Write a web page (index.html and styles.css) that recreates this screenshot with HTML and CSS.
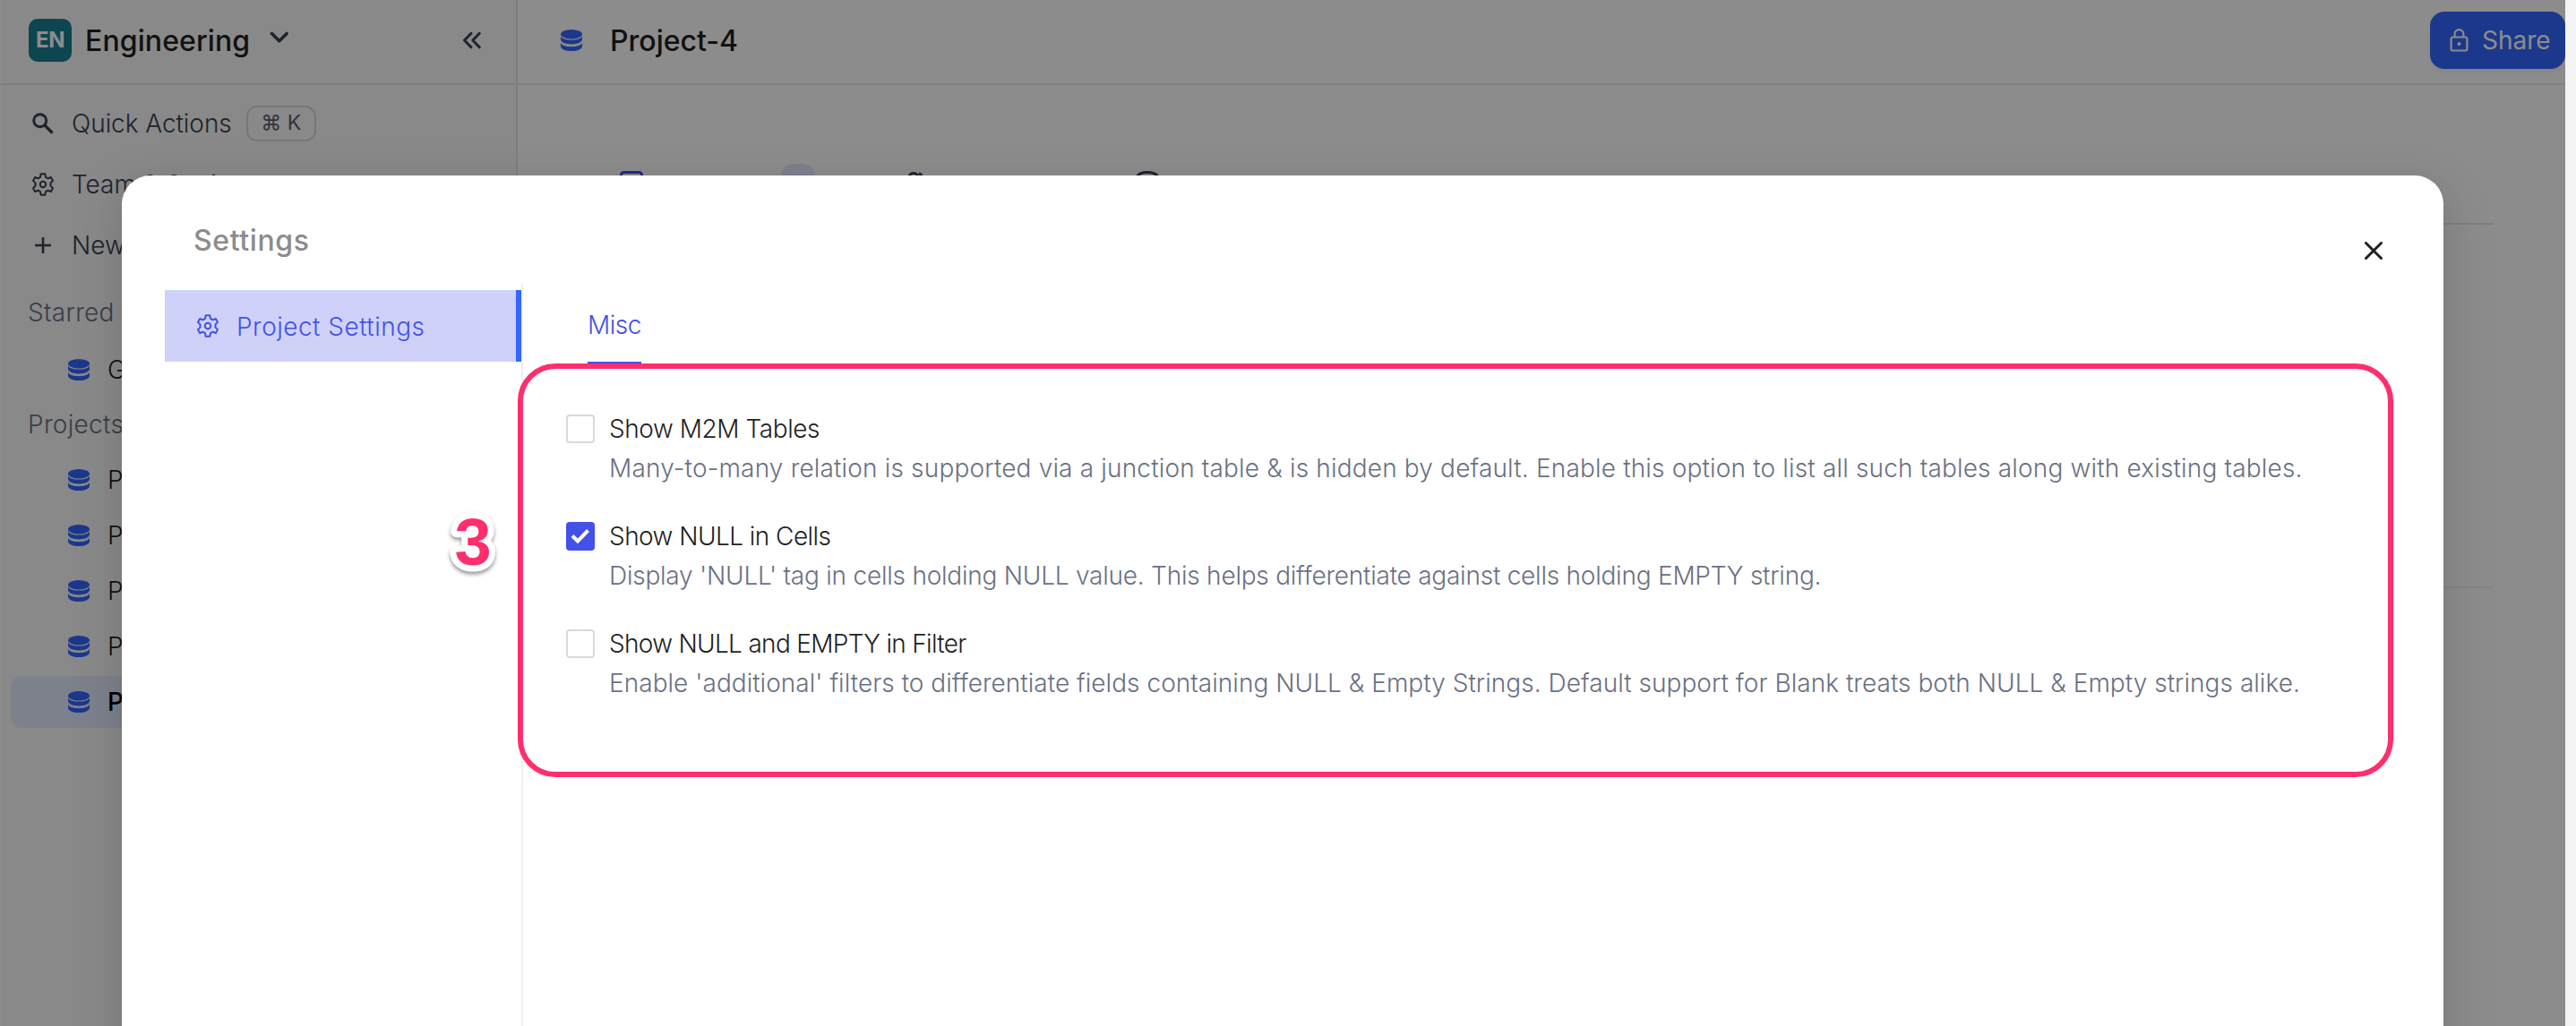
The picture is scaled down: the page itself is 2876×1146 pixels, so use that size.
FILE: index.html
```html
<!DOCTYPE html>
<html lang="en">
<head>
<meta charset="utf-8">
<title>Project-4</title>
<link rel="stylesheet" href="styles.css">
</head>
<body>
<svg class="defs" width="0" height="0">
  <symbol id="db" viewBox="0 0 24 24">
    <ellipse cx="12" cy="5.2" rx="12" ry="5.2"/>
    <path d="M0 7.2c1 3 6 4.4 12 4.4s11-1.4 12-4.4v3.6c0 3.4-5.400 5.700-12 5.700S0 14.200 0 10.800z"/>
    <path d="M0 14.800c1 3 6 4.400 12 4.400s11-1.400 12-4.400v3.600c0 3.400-5.400 5.600-12 5.600S0 21.800 0 18.400z"/>
  </symbol>
  <symbol id="gear" viewBox="0 0 24 26">
    <path d="M9.700 1.200h4.600l.7 3.600 2.500 1.500 3.400-1.300 2.100 3.900-2.500 2.500v3.200l2.500 2.500-2.100 3.900-3.400-1.300-2.500 1.500-.7 3.600H9.700L9 21.200l-2.500-1.500L3.100 21 1 17.100l2.500-2.500v-3.200L1 8.900 3.100 5l3.400 1.300L9 4.800z" fill="none" stroke="currentColor" stroke-width="2" stroke-linejoin="round"/>
    <circle cx="12" cy="13" r="3.200" fill="none" stroke="currentColor" stroke-width="2"/>
  </symbol>
</svg>

<div class="app">
  <aside class="sidebar">
    <header class="workspace">
      <span class="badge">EN</span>
      <span class="workspace-name">Engineering</span>
      <svg class="chevron" width="22" height="14" viewBox="0 0 22 14"><path d="M2.500 2.500l8.300 8.300 8.300-8.300"/></svg>
      <svg class="collapse" width="22" height="20" viewBox="0 0 22 20"><path d="M10 2.300L2.500 10l7.500 7.700M19.300 2.300L11.800 10l7.500 7.700"/></svg>
    </header>
    <nav class="actions">
      <div class="action">
        <svg width="24" height="24" viewBox="0 0 24 24"><circle cx="8.700" cy="8.700" r="7" fill="none" stroke="currentColor" stroke-width="3"/><path d="M13.800 13.800l8.700 8.700" stroke="currentColor" stroke-width="3.400"/></svg>
        <span class="quick">Quick Actions</span><kbd>⌘ K</kbd>
      </div>
      <div class="action"><svg width="24" height="26"><use href="#gear"/></svg><span>Team &amp; Settings</span></div>
      <div class="action"><svg width="24" height="24" viewBox="0 0 24 24"><path d="M12 3v18M3 12h18" stroke="currentColor" stroke-width="2.600"/></svg><span>New</span></div>
    </nav>
    <h2 class="group starred">Starred</h2>
    <ul class="projects">
      <li><svg><use href="#db"/></svg>Getting Started</li>
    </ul>
    <h2 class="group">Projects</h2>
    <ul class="projects">
      <li><svg><use href="#db"/></svg>Project-0</li>
      <li><svg><use href="#db"/></svg>Project-1</li>
      <li><svg><use href="#db"/></svg>Project-2</li>
      <li><svg><use href="#db"/></svg>Project-3</li>
      <li class="active"><svg><use href="#db"/></svg>Project-4</li>
    </ul>
  </aside>

  <main class="main">
    <header class="topbar">
      <svg class="topbar-icon"><use href="#db"/></svg>
      <h1>Project-4</h1>
      <button class="share">
        <svg width="22" height="26" viewBox="0 0 22 26" fill="none" stroke="currentColor" stroke-width="2.200"><rect x="1.600" y="9.500" width="17.800" height="15" rx="2"/><path d="M5.600 9.500V6a4.900 4.900 0 0 1 9.800 0v3.500"/><circle cx="10.500" cy="17" r="1.200" fill="currentColor" stroke-width="1.600"/></svg>
        <span>Share</span>
      </button>
    </header>
    <div class="tabs">
      <div class="tab current"><svg width="26" height="26" viewBox="0 0 26 26"><rect x="1.500" y="1.500" width="23" height="23" rx="3"/></svg><span>All tables</span><i class="count"></i></div>
      <div class="tab people"><svg width="26" height="26" viewBox="0 0 26 26"><circle cx="9" cy="8" r="5.500"/><path d="M15 2.500a5.500 5.500 0 0 1 0 10"/></svg><span>Collaborators</span></div>
      <div class="tab sources"><svg width="26" height="26" viewBox="0 0 26 26"><ellipse cx="13" cy="6" rx="11" ry="4.500"/></svg><span>Data Sources</span></div>
    </div>
    <div class="table-head"></div>
  </main>
</div>

<div class="overlay">
  <section class="modal">
    <header class="modal-head">
      <h2>Settings</h2>
      <svg class="close" width="20" height="20" viewBox="0 0 20 20"><path d="M1.500 1.500l17 17M18.500 1.500l-17 17"/></svg>
    </header>
    <div class="modal-body">
      <nav class="side">
        <div class="side-item"><svg width="24" height="26"><use href="#gear"/></svg><span>Project Settings</span></div>
      </nav>
      <div class="pane">
        <div class="pane-tabs"><span class="pane-tab">Misc</span></div>
        <div class="options">
          <label class="option">
            <span class="box"></span>
            <span class="name m2m">Show M2M Tables</span>
            <span class="desc m2m-desc">Many-to-many relation is supported via a junction table &amp; is hidden by default. Enable this option to list all such tables along with existing tables.</span>
          </label>
          <label class="option">
            <span class="box checked"><svg width="22" height="18" viewBox="0 0 22 18"><path d="M2 8.500l6 6L19.500 2.500"/></svg></span>
            <span class="name cells">Show NULL in Cells</span>
            <span class="desc cells-desc">Display 'NULL' tag in cells holding NULL value. This helps differentiate against cells holding EMPTY string.</span>
          </label>
          <label class="option">
            <span class="box"></span>
            <span class="name filter">Show NULL and EMPTY in Filter</span>
            <span class="desc filter-desc">Enable 'additional' filters to differentiate fields containing NULL &amp; Empty Strings. Default support for Blank treats both NULL &amp; Empty strings alike.</span>
          </label>
        </div>
      </div>
    </div>
  </section>
</div>

<div class="callout"></div>
<svg class="step" width="80" height="100" viewBox="0 0 80 100"><text x="40" y="72" text-anchor="middle">3</text></svg>
</body>
</html>
```
FILE: styles.css
```css
* { box-sizing: border-box; }

body {
  margin: 0;
  position: relative;
  width: 2876px;
  height: 1146px;
  overflow: hidden;
  background: #f3f3f3;
  color: #1f1f1f;
  font: 350 28px/40px Inter, "Liberation Sans", sans-serif;
  white-space: nowrap;
}

h1, h2, ul { margin: 0; padding: 0; font-weight: inherit; font-size: inherit; list-style: none; }
svg { flex: none; }
.defs { position: absolute; }

/* Application behind the dialog */
.app { display: flex; width: 2864px; height: 1146px; background: #fff; overflow: hidden; }

.sidebar {
  width: 578px;
  flex: none;
  border-right: 2px solid #e7e7e9;
  background: #f9f9fa;
  box-shadow: inset 2px 0 #fff;
  color: #374151;
}

.workspace {
  display: flex;
  align-items: center;
  height: 95px;
  padding: 0 38px 3px 32px;
  border-bottom: 2px solid #e7e7e9;
}
.badge {
  width: 48px;
  height: 48px;
  border-radius: 10px;
  background: #187f92;
  color: #fff;
  font-size: 24px;
  font-weight: 700;
  line-height: 48px;
  text-align: center;
  letter-spacing: -0.5px;
}
.workspace-name { margin-left: 15px; padding-top: 2px; font-size: 32px; font-weight: 500; letter-spacing: .1px; color: #1f1f1f; }
.chevron { margin: -6px 0 0 22px; }
.chevron path, .collapse path { fill: none; stroke: #374151; stroke-width: 3.6; stroke-linecap: round; stroke-linejoin: round; }
.collapse { margin-left: auto; }
.collapse path { stroke-width: 3; }

.actions { padding-top: 9px; }
.action { display: flex; align-items: center; height: 68px; padding-left: 36px; gap: 20px; }
.action .quick { letter-spacing: -0.05px; }
kbd {
  width: 78px;
  height: 40px;
  margin-left: -4px;
  border: 2px solid #d9d9de;
  border-radius: 12px;
  font: 400 23px/34px Inter, "DejaVu Sans", sans-serif;
  color: #5a6072;
  text-align: center;
}

.group { height: 61px; padding: 10px 0 0 31px; color: #6a7184; letter-spacing: .3px; }
.group.starred { height: 74px; padding-top: 21px; }
.projects li {
  display: flex;
  align-items: center;
  gap: 20px;
  height: 58px;
  margin: 2px 12px;
  padding-left: 64px;
  border-radius: 12px;
  color: #1f1f1f;
}
.projects { display: flex; flex-direction: column; }
.projects svg, .topbar-icon { width: 24px; height: 24px; fill: #36f; }
.projects .active { background: #e4ecff; color: #000; font-weight: 500; }

.main { flex: 1; min-width: 0; }
.topbar {
  display: flex;
  align-items: center;
  height: 95px;
  padding: 0 0 3px 48px;
  border-bottom: 2px solid #e7e7e9;
}
.topbar h1 { margin-left: 31px; padding-top: 2px; font-size: 32px; font-weight: 450; }
.share {
  display: flex;
  align-items: center;
  gap: 14px;
  width: 151px;
  height: 64px;
  margin-left: auto;
  padding: 0 0 1px 22px;
  border: 0;
  border-radius: 16px;
  background: #36f;
  box-shadow: 0 4px 4px rgba(0, 0, 0, .04);
  color: #fff;
  font: 400 28px/40px Inter, sans-serif;
}
.share span { padding-top: 1px; }

.tabs { display: flex; height: 156px; margin-right: 80px; padding: 88px 0 0 114px; border-bottom: 2px solid #e7e7e9; color: #374151; }
.tab { display: flex; align-items: flex-start; gap: 20px; padding-top: 8px; }
.tab svg { fill: none; stroke: currentColor; stroke-width: 3; }
.tab span { margin-top: 2px; }
.tab.current { color: #4351e8; }
.tab.people { margin-left: 101px; }
.tab.sources { margin-left: 38px; }
.count { width: 38px; height: 44px; margin: -8px 0 0 -4px; border-radius: 14px; background: #e4ecff; }
.table-head { height: 406px; margin-right: 80px; border-bottom: 2px solid #f3f3f5; }

/* Dialog */
.overlay {
  position: absolute;
  inset: 0 12px 0 0;
  padding: 196px 136px 0;
  overflow: hidden;
  background: rgba(0, 0, 0, .45);
}
.modal {
  height: 1100px;
  border-radius: 32px;
  background: #fff;
  box-shadow: 0 12px 32px rgba(0, 0, 0, .08), 0 6px 12px -8px rgba(0, 0, 0, .12), 0 18px 56px 16px rgba(0, 0, 0, .05);
}
.modal-head { display: flex; justify-content: space-between; height: 120px; padding: 53px 68px 0 80px; }
.modal-head h2 { font-size: 32px; font-weight: 550; color: #8c8c8c; letter-spacing: .6px; }
.close { margin-top: 21px; fill: none; stroke: #1f1f1f; stroke-width: 3; stroke-linecap: round; }
.modal-body { display: flex; height: 980px; padding-left: 48px; }
.side { width: 400px; padding-top: 8px; border-right: 2px solid #f0f0f0; }
.side-item {
  display: flex;
  align-items: center;
  gap: 20px;
  height: 80px;
  padding-left: 36px;
  border-right: 6px solid #36f;
  background: #cfd1f8;
  color: #4351e8;
  letter-spacing: .48px;
}
.side-item span { padding-top: 2px; }
.pane { flex: 1; padding: 0 80px 0 48px; }
.pane-tabs { height: 92px; padding-left: 24px; border-bottom: 2px solid #f0f0f0; }
.pane-tab {
  display: block;
  width: 60px;
  height: 92px;
  padding-top: 27px;
  border-bottom: 4px solid #4351e8;
  color: #4351e8;
  letter-spacing: -.5px;
}

.options { display: flex; flex-direction: column; gap: 32px; padding-top: 49px; }
.option { display: grid; grid-template-columns: 48px 1fr; grid-auto-rows: 44px; align-items: center; }
.box { width: 32px; height: 32px; border: 2px solid #d9d9d9; border-radius: 4px; background: #fff; }
.box.checked { display: flex; align-items: center; justify-content: center; border: 0; background: #4351e8; }
.box path { fill: none; stroke: #fff; stroke-width: 4; }
.desc { grid-column: 2; color: #6a7184; }
.m2m { letter-spacing: -.44px; }
.cells { letter-spacing: -.55px; }
.filter { letter-spacing: -.69px; }
.m2m-desc { letter-spacing: .17px; }
.cells-desc { letter-spacing: -.23px; }
.filter-desc { letter-spacing: .035px; }

/* Annotation drawn over the dialog */
.callout {
  position: absolute;
  left: 578px;
  top: 406px;
  width: 2094px;
  height: 462px;
  border: 6px solid #ff2e6c;
  border-radius: 42px;
}
.step { position: absolute; left: 488px; top: 559px; filter: drop-shadow(0 3px 2px rgba(0, 0, 0, .4)); }
.step text {
  font: 700 74px "Liberation Sans", sans-serif;
  fill: #ff2e6c;
  stroke: #fff;
  stroke-width: 14px;
  stroke-linejoin: round;
  paint-order: stroke;
}
```
